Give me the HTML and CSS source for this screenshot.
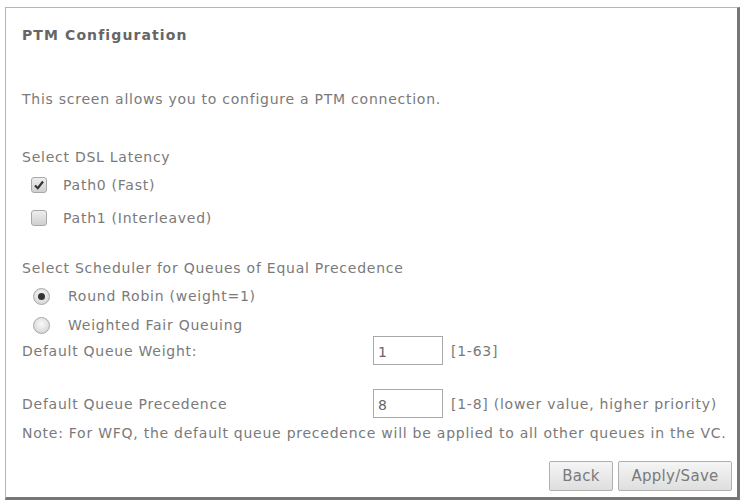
FILE: index.html
```html
<!DOCTYPE html>
<html lang="en">

<head>
    <meta charset="UTF-8" />
    <title>PTM Configuration</title>
    <link rel="stylesheet" href="styles.css">
</head>

<body>
    <form class="frame" id="ptmForm">
        <div class="row title">PTM Configuration</div>
        <div class="row desc">This screen allows you to configure a PTM connection.</div>

        <div class="row gap-section">Select DSL Latency</div>
        <label class="row option first">
            <span class="box checked">
                <svg width="12" height="12" viewBox="0 0 12 12">
                    <path d="M2 6.5 L4.8 9.2 L10 2.5" fill="none" stroke="#333" stroke-width="2.2" />
                </svg>
            </span>
            Path0 (Fast)
        </label>
        <label class="row option second">
            <span class="box"></span>
            Path1 (Interleaved)
        </label>

        <div class="row gap-sched">Select Scheduler for Queues of Equal Precedence</div>
        <label class="row option first">
            <span class="radio checked"><span class="dot"></span></span>
            Round Robin (weight=1)
        </label>
        <label class="row option third">
            <span class="radio"></span>
            Weighted Fair Queuing
        </label>

        <div class="row field weight">
            <span class="field-label">Default Queue Weight:</span>
            <input type="text" value="1" />
            <span class="range">[1-63]</span>
        </div>
        <div class="row field prec">
            <span class="field-label">Default Queue Precedence</span>
            <input type="text" value="8" />
            <span class="range">[1-8] (lower value, higher priority)</span>
        </div>
        <div class="row note">Note: For WFQ, the default queue precedence will be applied to all other queues in the VC.</div>

        <div class="buttons">
            <button type="button" class="back">Back</button>
            <button type="submit" class="save">Apply/Save</button>
        </div>
    </form>
</body>

</html>
```

FILE: styles.css
```css
body {
    margin: 0;
    font-family: "DejaVu Sans", Tahoma, sans-serif;
    font-size: 14px;
    letter-spacing: 0.75px;
    color: #7a7a7a;
    background: #fff;
}

.frame {
    margin: 7px 0 0 5px;
    width: 735px;
    height: 493px;
    box-sizing: border-box;
    border: 1px solid #b5b5b5;
    border-right: 3px solid #777;
    border-bottom: 3px solid #777;
    padding: 17px 5px 0 16px;
}

.row {
    display: flex;
    align-items: center;
    height: 20px;
    white-space: nowrap;
}

.title {
    font-weight: bold;
    letter-spacing: 1.1px;
    color: #666;
}

.desc {
    margin-top: 44px;
}

.gap-section {
    margin-top: 38px;
}

.gap-sched {
    margin-top: 30px;
}

.option {
    padding-left: 9px;
}

.option.first {
    margin-top: 8px;
}

.option.second {
    margin-top: 13px;
}

.option.third {
    margin-top: 9px;
}

.box {
    width: 16px;
    height: 16px;
    box-sizing: border-box;
    border: 1px solid #a8a8a8;
    border-radius: 3px;
    background: linear-gradient(#eeeeee, #cfcfcf);
    margin-right: 16px;
    display: flex;
    align-items: center;
    justify-content: center;
}

.radio {
    width: 17px;
    height: 17px;
    box-sizing: border-box;
    border: 1px solid #a8a8a8;
    border-radius: 50%;
    background: radial-gradient(circle at 50% 40%, #fafafa, #cccccc);
    margin: 0 18px 0 2px;
    display: flex;
    align-items: center;
    justify-content: center;
}

.dot {
    width: 7px;
    height: 7px;
    border-radius: 50%;
    background: #333;
}

.field {
    height: 29px;
}

.weight {
    margin-top: 1px;
}

.prec {
    margin-top: 24px;
}

.field-label {
    width: 351px;
    flex-shrink: 0;
}

.field input {
    width: 70px;
    height: 29px;
    box-sizing: border-box;
    border: 1px solid #aaa;
    padding: 2px 4px 0;
    font-family: inherit;
    font-size: 14px;
    color: #666;
    margin: 0 8px 0 0;
}

.note {
    margin-top: 5px;
}

.buttons {
    margin-top: 18px;
    display: flex;
    justify-content: flex-end;
    gap: 5px;
}

button {
    height: 30px;
    padding: 0;
    font-family: inherit;
    font-size: 15px;
    letter-spacing: 0.3px;
    color: #7a7a7a;
    background: linear-gradient(#f5f5f5, #dedede);
    border: 1px solid #b0b0b0;
    border-radius: 2px;
    cursor: pointer;
}

.back {
    width: 64px;
}

.save {
    width: 114px;
}
```
